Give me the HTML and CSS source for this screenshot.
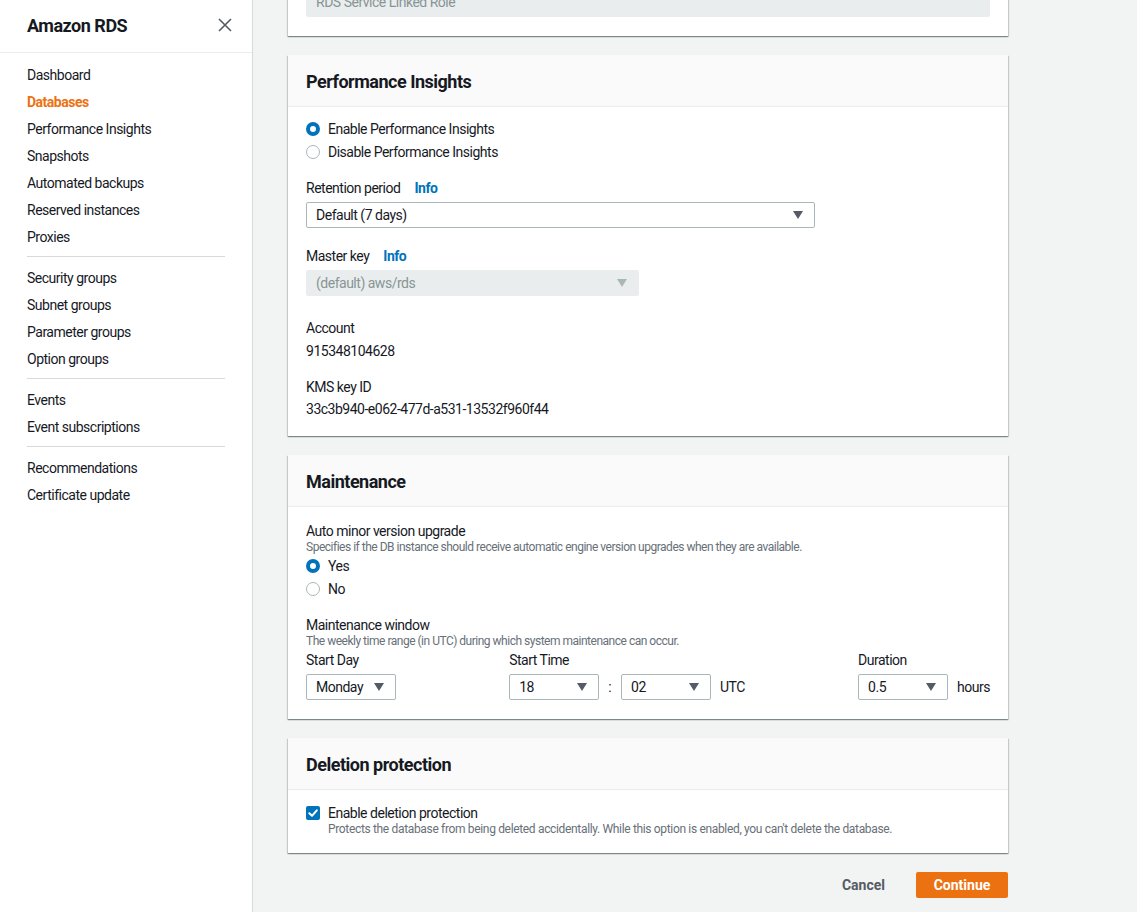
FILE: index.html
```html
<!DOCTYPE html>
<html lang="en">
<head>
<meta charset="utf-8">
<title>Amazon RDS</title>
<link rel="stylesheet" href="styles.css">
</head>
<body>
<div class="layout">
  <aside class="sidebar">
    <div class="side-head">
      <span class="side-title">Amazon RDS</span>
      <svg class="close" width="14" height="14" viewBox="0 0 14 14"><path d="M1 1L13 13M13 1L1 13" stroke="#545b64" stroke-width="1.6" fill="none"/></svg>
    </div>
    <nav class="side-nav">
      <ul>
        <li>Dashboard</li>
        <li class="active">Databases</li>
        <li>Performance Insights</li>
        <li>Snapshots</li>
        <li>Automated backups</li>
        <li>Reserved instances</li>
        <li>Proxies</li>
      </ul>
      <hr>
      <ul>
        <li>Security groups</li>
        <li>Subnet groups</li>
        <li>Parameter groups</li>
        <li>Option groups</li>
      </ul>
      <hr>
      <ul>
        <li>Events</li>
        <li>Event subscriptions</li>
      </ul>
      <hr>
      <ul>
        <li>Recommendations</li>
        <li>Certificate update</li>
      </ul>
    </nav>
  </aside>

  <main class="main">
    <section class="card card-top">
      <div class="card-body top-body">
        <div class="input disabled wide">RDS Service Linked Role</div>
      </div>
    </section>

    <section class="card">
      <header class="card-head"><h2>Performance Insights</h2></header>
      <div class="card-body pi-body">
        <div class="radios">
          <label class="radio"><span class="dot checked"></span>Enable Performance Insights</label>
          <label class="radio"><span class="dot"></span>Disable Performance Insights</label>
        </div>
        <div class="field f-ret">
          <div class="label">Retention period <span class="info">Info</span></div>
          <div class="select sel-ret"><span>Default (7 days)</span><span class="caret"></span></div>
        </div>
        <div class="field f-key">
          <div class="label">Master key <span class="info">Info</span></div>
          <div class="select disabled sel-key"><span>(default) aws/rds</span><span class="caret light"></span></div>
        </div>
        <div class="field f-acct">
          <div class="label">Account</div>
          <div class="value">915348104628</div>
        </div>
        <div class="field f-kms">
          <div class="label">KMS key ID</div>
          <div class="value">33c3b940-e062-477d-a531-13532f960f44</div>
        </div>
      </div>
    </section>

    <section class="card">
      <header class="card-head"><h2>Maintenance</h2></header>
      <div class="card-body maint-body">
        <div class="label">Auto minor version upgrade</div>
        <div class="desc">Specifies if the DB instance should receive automatic engine version upgrades when they are available.</div>
        <div class="radios">
          <label class="radio"><span class="dot checked"></span>Yes</label>
          <label class="radio"><span class="dot"></span>No</label>
        </div>
        <div class="label mw">Maintenance window</div>
        <div class="desc">The weekly time range (in UTC) during which system maintenance can occur.</div>
        <div class="window">
          <div class="wcol">
            <div class="label">Start Day</div>
            <div class="select small"><span>Monday</span><span class="caret"></span></div>
          </div>
          <div class="wcol">
            <div class="label">Start Time</div>
            <div class="inline">
              <div class="select small"><span>18</span><span class="caret"></span></div>
              <span class="colon">:</span>
              <div class="select small"><span>02</span><span class="caret"></span></div>
              <span class="unit utc">UTC</span>
            </div>
          </div>
          <div class="wcol">
            <div class="label">Duration</div>
            <div class="inline">
              <div class="select small"><span>0.5</span><span class="caret"></span></div>
              <span class="unit hours">hours</span>
            </div>
          </div>
        </div>
      </div>
    </section>

    <section class="card">
      <header class="card-head"><h2>Deletion protection</h2></header>
      <div class="card-body del-body">
        <label class="check">
          <span class="box"><svg width="14" height="14" viewBox="0 0 14 14"><path d="M3.3 7.2L6 9.8L10.8 4.3" stroke="#fff" stroke-width="2" fill="none" stroke-linecap="round" stroke-linejoin="round"/></svg></span>
          <span class="check-text">
            <span class="check-label">Enable deletion protection</span>
            <span class="desc">Protects the database from being deleted accidentally. While this option is enabled, you can't delete the database.</span>
          </span>
        </label>
      </div>
    </section>

    <div class="actions">
      <button class="btn-link">Cancel</button>
      <button class="btn-primary">Continue</button>
    </div>
  </main>
</div>
</body>
</html>
```

FILE: styles.css
```css
* { box-sizing: border-box; }
html, body { margin: 0; padding: 0; height: 100%; }
body {
  font-family: Roboto, "Noto Sans", "Liberation Sans", sans-serif;
  font-size: 14px;
  letter-spacing: -0.035em;
  color: #16191f;
  background: #f2f3f3;
  overflow: hidden;
}
.layout { display: flex; min-height: 912px; }

.sidebar {
  width: 253px;
  flex: 0 0 253px;
  background: #fff;
  border-right: 1px solid #d5dbdb;
}
.side-head {
  height: 53px;
  border-bottom: 1px solid #eaeded;
  display: flex;
  align-items: center;
  justify-content: space-between;
  padding: 0 20px 2px 27px;
}
.side-title { font-size: 18px; font-weight: 700; color: #16191f; }
.close { display: block; }
.side-nav { padding: 9px 27px 0 27px; }
.side-nav ul { list-style: none; margin: 0; padding: 0; }
.side-nav li { height: 27px; line-height: 26px; color: #16191f; }
.side-nav li.active { color: #ec7211; font-weight: 700; }
.side-nav hr { border: 0; border-top: 1px solid #d5dbdb; margin: 5px 0 8px 0; }

.main {
  flex: 1;
  padding: 0 0 0 35px;
  margin-top: -14px;
}
.card {
  width: 720px;
  background: #fff;
  box-shadow: 0 1px 1px 0 rgba(0,28,36,.3), 1px 1px 1px 0 rgba(0,28,36,.15), -1px 1px 1px 0 rgba(0,28,36,.15);
  margin-bottom: 19px;
}
.card-head {
  height: 52px;
  background: #fafafa;
  border-bottom: 1px solid #eaeded;
  display: flex;
  align-items: center;
  padding: 2px 18px 0 18px;
}
.card-head h2 { margin: 0; font-size: 18px; font-weight: 700; }
.card-body { padding: 10px 18px 17px 18px; }
.top-body { padding: 0 18px 19px 18px; }
.pi-body { padding: 10px 18px 16px 18px; }

.input.disabled.wide {
  height: 31px;
  background: #eaeded;
  color: #879596;
  border-radius: 2px;
  padding: 0 10px;
  display: flex;
  align-items: center;
  width: 684px;
}

.radios { display: flex; flex-direction: column; }
.radio { display: flex; align-items: center; height: 23px; }
.dot {
  width: 14px; height: 14px; border-radius: 50%;
  border: 1px solid #aab7b8;
  margin-right: 8px; background: #fff;
  flex: 0 0 14px;
}
.dot.checked { border: 4px solid #0073bb; }

.field { display: flex; flex-direction: column; }
.label { line-height: 22px; }
.info { color: #0073bb; font-weight: 700; margin-left: 11px; }
.f-ret { margin-top: 14px; }
.f-key { margin-top: 17px; }
.f-acct { margin-top: 21px; }
.f-acct .value { margin-top: 1px; }
.f-kms { margin-top: 14px; }
.value { line-height: 22px; }

.select {
  height: 26px;
  border: 1px solid #aab7b8;
  border-radius: 2px;
  background: #fff;
  display: flex;
  align-items: center;
  justify-content: space-between;
  padding: 0 11px 0 9px;
}
.f-ret .select { margin-top: 3px; width: 509px; }
.f-key .select { margin-top: 3px; width: 333px; }
.select.disabled { background: #eaeded; border-color: #eaeded; color: #879596; }
.caret {
  width: 0; height: 0;
  border-left: 5px solid transparent;
  border-right: 5px solid transparent;
  border-top: 8px solid #545b64;
}
.caret.light { border-top-color: #aab7b8; }

.maint-body { padding: 14px 18px 19px 18px; }
.label, .desc { display: block; }
.maint-body > .label { line-height: 20px; }
.desc { font-size: 12px; color: #687078; line-height: 16px; }
.maint-body > .desc { margin-top: -2px; }
.maint-body .radios { margin-top: -1px; }
.mw { margin-top: 15px; }
.window { display: flex; justify-content: space-between; margin-top: 1px; }
.wcol .label { line-height: 20px; margin-bottom: 4px; }
.select.small { width: 90px; height: 26px; }
.inline { display: flex; align-items: center; }
.colon { margin: 0 10px 0 9px; }
.utc { margin-left: 9px; }
.hours { margin-left: 9px; }

.del-body { padding: 14px 18px 17px 18px; }
.check { display: flex; align-items: flex-start; }
.box {
  width: 14px; height: 14px; border-radius: 2px;
  background: #0073bb; margin: 2px 8px 0 0;
  display: flex; flex: 0 0 14px;
}
.check-text { display: flex; flex-direction: column; }
.check-label { line-height: 18px; }
.check-text .desc { line-height: 14px; letter-spacing: -0.028em; }

.actions {
  width: 720px;
  display: flex;
  justify-content: flex-end;
  align-items: center;
  margin-top: 0;
}
.btn-link {
  background: none; border: 0;
  font: inherit; font-weight: 700; color: #545b64;
  padding: 0 20px; height: 26px; margin-right: 11px;
}
.btn-primary {
  background: #ec7211; border: 0; border-radius: 2px;
  color: #fff; font: inherit; font-weight: 700;
  width: 92px; height: 26px; padding: 0;
}
```
